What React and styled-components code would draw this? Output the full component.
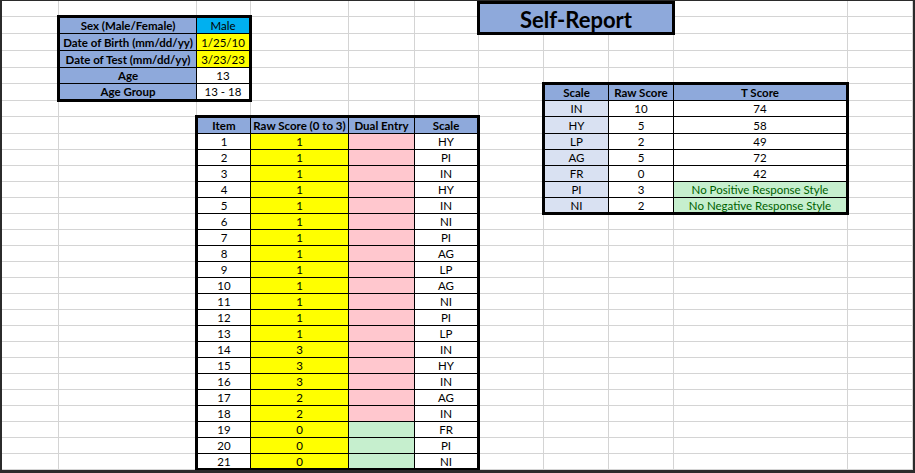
import React from "react";
import styled, { createGlobalStyle } from "styled-components";

// sheet track sizes (columns A..K, rows 1..29), in px
const COLS = [57, 138, 54, 98, 66, 64, 65, 65, 65, 174, 65];
const ROWS = [16, 17, 17, 17, 16, 17, 16, 17, ...Array(21).fill(16)];

const BLUE = "#8ea9db";
const PALE = "#d9e1f2";
const CYAN = "#00b0f0";
const YELLOW = "#ffff00";
const PINK = "#ffc7ce";
const GREEN = "#c6efce";
const GREEN_TEXT = "#006100";

const px = (list) => list.map((v) => `${v}px`).join(" ");

// inner tracks of a bordered table that covers sheet tracks [from, to)
const inner = (list, from, to) => {
  const t = list.slice(from, to);
  return px(t.map((v, i) => v - 1 - (i === 0 ? 1 : 0) - (i === t.length - 1 ? 1 : 0)));
};

const info = [
  ["Sex (Male/Female)", "Male", CYAN],
  ["Date of Birth (mm/dd/yy)", "1/25/10", YELLOW],
  ["Date of Test (mm/dd/yy)", "3/23/23", YELLOW],
  ["Age", "13"],
  ["Age Group", "13 - 18"],
];

const scores = [
  ["IN", 10, 74],
  ["HY", 5, 58],
  ["LP", 2, 49],
  ["AG", 5, 72],
  ["FR", 0, 42],
  ["PI", 3, "No Positive Response Style", true],
  ["NI", 2, "No Negative Response Style", true],
];

const scales = ["HY", "PI", "IN", "HY", "IN", "NI", "PI", "AG", "LP", "AG", "NI", "PI", "LP", "IN", "HY", "IN", "AG", "IN", "FR", "PI", "NI"];
const raws = [1, 1, 1, 1, 1, 1, 1, 1, 1, 1, 1, 1, 1, 3, 3, 3, 2, 2, 0, 0, 0];

export default function App() {
  return (
    <>
      <GlobalStyle />
      <Sheet>
        <Lines>
          {COLS.flatMap((_, c) => ROWS.map((_, r) => <Line key={`${c}-${r}`} />))}
        </Lines>

        <Table $col="2 / 4" $row="2 / 7" $cols={inner(COLS, 1, 3)} $rows={inner(ROWS, 1, 6)}>
          {info.map(([label, value, bg]) => (
            <React.Fragment key={label}>
              <Cell $bg={BLUE} $bold>{label}</Cell>
              <Cell $bg={bg}>{value}</Cell>
            </React.Fragment>
          ))}
        </Table>

        <Title>Self-Report</Title>

        <Table $col="8 / 11" $row="6 / 14" $cols={inner(COLS, 7, 10)} $rows={inner(ROWS, 5, 13)}>
          <Cell $bg={BLUE} $bold>Scale</Cell>
          <Cell $bg={BLUE} $bold>Raw Score</Cell>
          <Cell $bg={BLUE} $bold>T Score</Cell>
          {scores.map(([scale, raw, t, ok]) => (
            <React.Fragment key={scale}>
              <Cell $bg={PALE}>{scale}</Cell>
              <Cell>{raw}</Cell>
              <Cell $bg={ok ? GREEN : undefined} $color={ok ? GREEN_TEXT : undefined}>{t}</Cell>
            </React.Fragment>
          ))}
        </Table>

        <Table $col="3 / 7" $row="8 / 30" $cols={inner(COLS, 2, 6)} $rows={inner(ROWS, 7, 29)}>
          <Cell $bg={BLUE} $bold>Item</Cell>
          <Cell $bg={BLUE} $bold>Raw Score (0 to 3)</Cell>
          <Cell $bg={BLUE} $bold>Dual Entry</Cell>
          <Cell $bg={BLUE} $bold>Scale</Cell>
          {scales.map((scale, i) => (
            <React.Fragment key={i}>
              <Cell>{i + 1}</Cell>
              <Cell $bg={YELLOW}>{raws[i]}</Cell>
              <Cell $bg={i < 18 ? PINK : GREEN} />
              <Cell>{scale}</Cell>
            </React.Fragment>
          ))}
        </Table>
      </Sheet>
    </>
  );
}

const GlobalStyle = createGlobalStyle`
  body {
    margin: 0;
    background: #fff;
    font-family: Lato, "Open Sans", sans-serif;
  }
`;

const Sheet = styled.div`
  box-sizing: border-box;
  width: 915px;
  height: 473px;
  border-style: solid;
  border-color: #2b2b2b;
  border-width: 1px 2px 3px 2px;
  display: grid;
  grid-template-columns: ${px(COLS)};
  grid-template-rows: ${px(ROWS)};
  overflow: hidden;
`;

const Lines = styled.div`
  grid-column: 1 / -1;
  grid-row: 1 / -1;
  display: grid;
  grid-template-columns: ${px(COLS)};
  grid-template-rows: ${px(ROWS)};
  grid-auto-flow: column;
`;

const Line = styled.div`
  box-sizing: border-box;
  border-right: 1px solid #d4d4d4;
  border-bottom: 1px solid #d4d4d4;
`;

const Table = styled.div`
  grid-column: ${(p) => p.$col};
  grid-row: ${(p) => p.$row};
  margin: -2px -1px -1px -2px;
  border: 3px solid #000;
  background: #000;
  display: grid;
  gap: 1px;
  grid-template-columns: ${(p) => p.$cols};
  grid-template-rows: ${(p) => p.$rows};
  z-index: 1;
`;

const Cell = styled.div`
  display: flex;
  align-items: center;
  justify-content: center;
  padding-top: 1px;
  box-sizing: border-box;
  overflow: hidden;
  white-space: nowrap;
  background: ${(p) => p.$bg || "#fff"};
  color: ${(p) => p.$color || "#000"};
  font-size: 11.5px;
  font-weight: ${(p) => (p.$bold ? 700 : 400)};
  line-height: 1;
`;

const Title = styled.div`
  grid-column: 7 / 10;
  grid-row: 1 / 3;
  margin: 0 -1px -1px -2px;
  border: 3px solid #000;
  background: ${BLUE};
  display: flex;
  align-items: center;
  justify-content: center;
  padding-top: 3px;
  box-sizing: border-box;
  font-size: 22px;
  font-weight: 700;
  color: #000;
  z-index: 1;
`;
